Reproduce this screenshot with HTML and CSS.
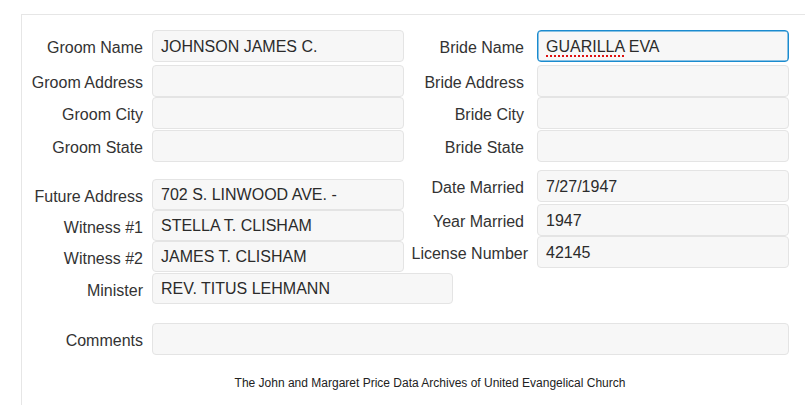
FILE: index.html
```html
<!DOCTYPE html>
<html>
<head>
<meta charset="utf-8">
<link rel="stylesheet" href="styles.css">
</head>
<body>
<div class="panel">
  <div class="top-grid">
    <div class="row r1">
      <div class="lbl l1">Groom Name</div><div class="field">JOHNSON JAMES C.</div>
      <div class="lbl l2">Bride Name</div><div class="field focus"><span class="spell">GUARILLA</span> EVA</div>
    </div>
    <div class="row r2">
      <div class="lbl l1">Groom Address</div><div class="field"></div>
      <div class="lbl l2">Bride Address</div><div class="field"></div>
    </div>
    <div class="row r3">
      <div class="lbl l1">Groom City</div><div class="field"></div>
      <div class="lbl l2">Bride City</div><div class="field"></div>
    </div>
    <div class="row r4">
      <div class="lbl l1">Groom State</div><div class="field"></div>
      <div class="lbl l2">Bride State</div><div class="field"></div>
    </div>
  </div>

  <div class="lower">
    <div class="lower-left">
      <div class="lrow"><div class="lbl l1">Future Address</div><div class="field">702 S. LINWOOD AVE. -</div></div>
      <div class="lrow"><div class="lbl l1">Witness #1</div><div class="field">STELLA T. CLISHAM</div></div>
      <div class="lrow"><div class="lbl l1">Witness #2</div><div class="field">JAMES T. CLISHAM</div></div>
      <div class="lrow minister"><div class="lbl l1">Minister</div><div class="field wide">REV. TITUS LEHMANN</div></div>
    </div>
    <div class="lower-right">
      <div class="rrow d1"><div class="lbl l2">Date Married</div><div class="field">7/27/1947</div></div>
      <div class="rrow d2"><div class="lbl l2">Year Married</div><div class="field">1947</div></div>
      <div class="rrow d3"><div class="lbl l2 lic">License Number</div><div class="field">42145</div></div>
    </div>
  </div>

  <div class="comments">
    <div class="lbl l1">Comments</div><div class="field full"></div>
  </div>

  <div class="footer">The John and Margaret Price Data Archives of United Evangelical Church</div>
</div>
</body>
</html>
```

FILE: styles.css
```css
html, body {
  margin: 0;
  padding: 0;
  background: #ffffff;
  overflow: hidden;
}
body {
  font-family: "Liberation Sans", Arial, sans-serif;
  font-size: 16px;
  color: #333333;
}
.panel {
  margin: 14px 0 0 21px;
  border-top: 1px solid #e6e6e6;
  border-left: 1px solid #e6e6e6;
  height: 391px;
  box-sizing: border-box;
}
.top-grid {
  padding-top: 15px;
  display: flex;
  flex-direction: column;
}
.row {
  display: flex;
  align-items: center;
  height: 32px;
}
.r1 { margin-bottom: 3px; }
.r2 { margin-bottom: 0; }
.r3 { margin-bottom: 1px; }
.lbl {
  text-align: right;
  white-space: nowrap;
  box-sizing: border-box;
  line-height: 18px;
  padding-top: 4px;
}
.l1 { width: 130px; padding-right: 9px; flex: none; }
.l2 { width: 133px; padding-right: 13px; flex: none; }
.lic { padding-right: 9px; }
.field {
  flex: none;
  box-sizing: border-box;
  width: 252px;
  height: 100%;
  background: #f7f7f7;
  border: 1px solid #e4e4e4;
  border-radius: 4px;
  padding: 1px 8px 0;
  line-height: 29px;
  color: #2b2b2b;
  white-space: pre;
}
.lrow .field { line-height: 28px; }
.focus {
  border-color: #1a8bcf;
  box-shadow: inset 0 0 0 0.5px #1a8bcf;
}
.spell {
  text-decoration: underline dotted #e01010;
  text-decoration-thickness: 2px;
  text-underline-offset: 3px;
}
.lower {
  display: flex;
  align-items: flex-start;
  margin-top: 8px;
}
.lower-left {
  width: 382px;
  margin-top: 9px;
  display: flex;
  flex-direction: column;
}
.lrow {
  display: flex;
  align-items: center;
  height: 31px;
}
.minister { margin-top: 1px; }
.field.wide { width: 301px; }
.lower-right {
  display: flex;
  flex-direction: column;
}
.rrow {
  display: flex;
  align-items: center;
  height: 32px;
}
.d1 { margin-bottom: 2px; }
.d2 { margin-bottom: 0; }
.comments {
  display: flex;
  align-items: center;
  height: 32px;
  margin-top: 19px;
}
.field.full { width: 637px; }
.footer {
  width: 816px;
  text-align: center;
  font-size: 12px;
  line-height: 14px;
  margin-top: 21px;
  color: #222222;
}
```
